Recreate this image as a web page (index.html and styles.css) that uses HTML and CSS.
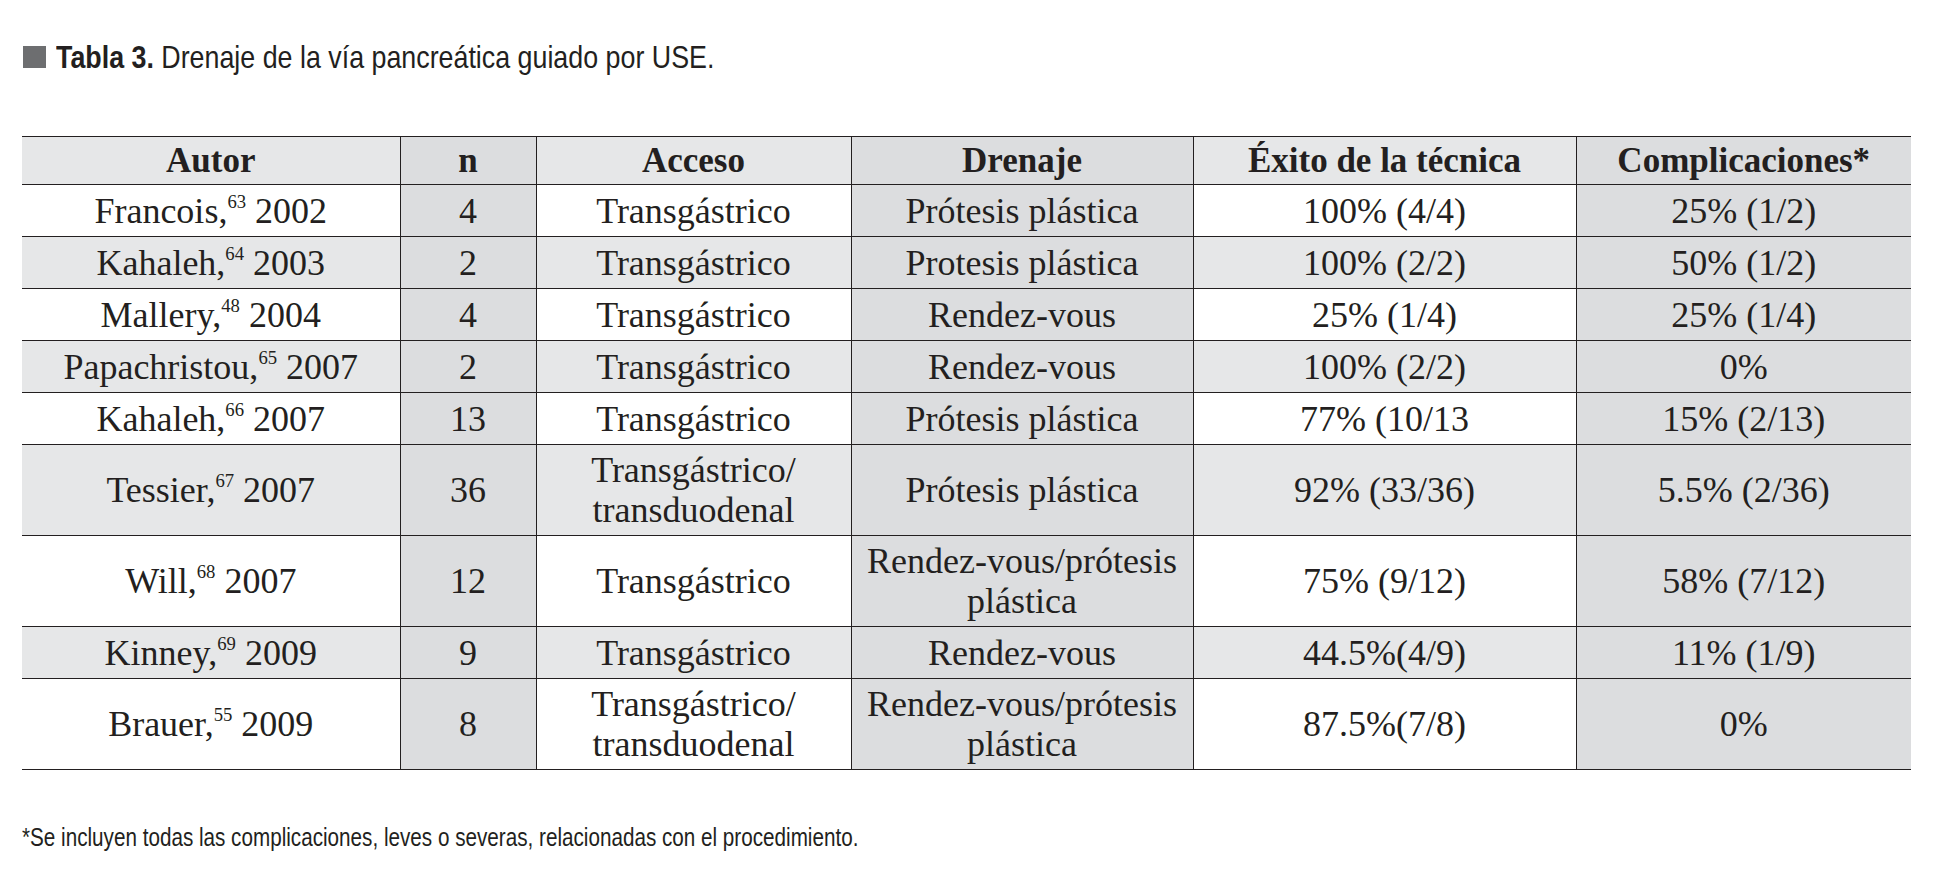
FILE: index.html
```html
<!DOCTYPE html>
<html lang="es">
<head>
<meta charset="utf-8">
<title>Tabla 3</title>
<link rel="stylesheet" href="styles.css">
</head>
<body>
<div class="page">
  <div class="caption">
    <span class="caption-mark"></span>
    <p class="caption-text"><b>Tabla 3.</b> Drenaje de la vía pancreática guiado por USE.</p>
  </div>

  <table class="data">
    <colgroup>
      <col class="c-autor">
      <col class="c-n">
      <col class="c-acceso">
      <col class="c-drenaje">
      <col class="c-exito">
      <col class="c-comp">
    </colgroup>
    <thead>
      <tr>
        <th>Autor</th>
        <th class="dk">n</th>
        <th>Acceso</th>
        <th class="dk">Drenaje</th>
        <th>Éxito de la técnica</th>
        <th class="dk">Complicaciones*</th>
      </tr>
    </thead>
    <tbody>
      <tr class="single">
        <td>Francois,<sup>63</sup> 2002</td>
        <td class="dk">4</td>
        <td>Transgástrico</td>
        <td class="dk">Prótesis plástica</td>
        <td>100% (4/4)</td>
        <td class="dk">25% (1/2)</td>
      </tr>
      <tr class="single alt">
        <td>Kahaleh,<sup>64</sup> 2003</td>
        <td class="dk">2</td>
        <td>Transgástrico</td>
        <td class="dk">Protesis plástica</td>
        <td>100% (2/2)</td>
        <td class="dk">50% (1/2)</td>
      </tr>
      <tr class="single">
        <td>Mallery,<sup>48</sup> 2004</td>
        <td class="dk">4</td>
        <td>Transgástrico</td>
        <td class="dk">Rendez-vous</td>
        <td>25% (1/4)</td>
        <td class="dk">25% (1/4)</td>
      </tr>
      <tr class="single alt">
        <td>Papachristou,<sup>65</sup> 2007</td>
        <td class="dk">2</td>
        <td>Transgástrico</td>
        <td class="dk">Rendez-vous</td>
        <td>100% (2/2)</td>
        <td class="dk">0%</td>
      </tr>
      <tr class="single">
        <td>Kahaleh,<sup>66</sup> 2007</td>
        <td class="dk">13</td>
        <td>Transgástrico</td>
        <td class="dk">Prótesis plástica</td>
        <td>77% (10/13</td>
        <td class="dk">15% (2/13)</td>
      </tr>
      <tr class="double alt">
        <td>Tessier,<sup>67</sup> 2007</td>
        <td class="dk">36</td>
        <td>Transgástrico/<br>transduodenal</td>
        <td class="dk">Prótesis plástica</td>
        <td>92% (33/36)</td>
        <td class="dk">5.5% (2/36)</td>
      </tr>
      <tr class="double">
        <td>Will,<sup>68</sup> 2007</td>
        <td class="dk">12</td>
        <td>Transgástrico</td>
        <td class="dk">Rendez-vous/prótesis<br>plástica</td>
        <td>75% (9/12)</td>
        <td class="dk">58% (7/12)</td>
      </tr>
      <tr class="single alt">
        <td>Kinney,<sup>69</sup> 2009</td>
        <td class="dk">9</td>
        <td>Transgástrico</td>
        <td class="dk">Rendez-vous</td>
        <td>44.5%(4/9)</td>
        <td class="dk">11% (1/9)</td>
      </tr>
      <tr class="double">
        <td>Brauer,<sup>55</sup> 2009</td>
        <td class="dk">8</td>
        <td>Transgástrico/<br>transduodenal</td>
        <td class="dk">Rendez-vous/prótesis<br>plástica</td>
        <td>87.5%(7/8)</td>
        <td class="dk">0%</td>
      </tr>
    </tbody>
  </table>

  <p class="footnote">*Se incluyen todas las complicaciones, leves o severas, relacionadas con el procedimiento.</p>
</div>
</body>
</html>
```

FILE: styles.css
```css
html, body {
  margin: 0;
  padding: 0;
  background: #ffffff;
}

.page {
  padding: 42px 39px 0 22px;
  color: #231f20;
}

.caption {
  display: flex;
  align-items: center;
  gap: 10px;
  height: 30px;
  padding-left: 1px;
}

.caption-mark {
  width: 23px;
  height: 22px;
  background: #6d6e70;
  flex: none;
}

.caption-text {
  margin: 0;
  font-family: "Liberation Sans", Arial, sans-serif;
  font-size: 32px;
  line-height: 30px;
  color: #231f20;
  white-space: nowrap;
  transform: scaleX(0.838);
  transform-origin: left center;
}

.caption-text b {
  font-weight: 700;
}

.data {
  margin-top: 64px;
  border-collapse: collapse;
  table-layout: fixed;
  width: 1889px;
  font-family: "Liberation Serif", "Times New Roman", serif;
  font-size: 36px;
  color: #231f20;
}

.c-autor { width: 378px; }
.c-n { width: 136px; }
.c-acceso { width: 315px; }
.c-drenaje { width: 342px; }
.c-exito { width: 383px; }
.c-comp { width: 335px; }

.data th,
.data td {
  border-top: 1.5px solid #231f20;
  border-bottom: 1.5px solid #231f20;
  border-left: 1.5px solid #231f20;
  padding: 0 4px;
  text-align: center;
  vertical-align: middle;
  line-height: 40px;
  background: #ffffff;
  white-space: nowrap;
  font-weight: 400;
}

.data th:first-child,
.data td:first-child {
  border-left: none;
}

.data thead th {
  height: 47px;
  font-size: 35px;
  font-weight: 700;
  background: #e6e7e8;
}

.data tr.single td {
  height: 51px;
}

.data tr.double td {
  height: 90px;
}

.data tr.alt td {
  background: #e6e7e8;
}

.data th.dk,
.data td.dk,
.data tr.alt td.dk {
  background: #dcdddf;
}

.data sup {
  font-size: 0.52em;
  line-height: 0;
  vertical-align: 0.78em;
}

.footnote {
  margin: 53px 0 0 0;
  font-family: "Liberation Sans", Arial, sans-serif;
  font-size: 26px;
  line-height: 28px;
  color: #231f20;
  white-space: nowrap;
  transform: scaleX(0.795);
  transform-origin: left center;
}
```
